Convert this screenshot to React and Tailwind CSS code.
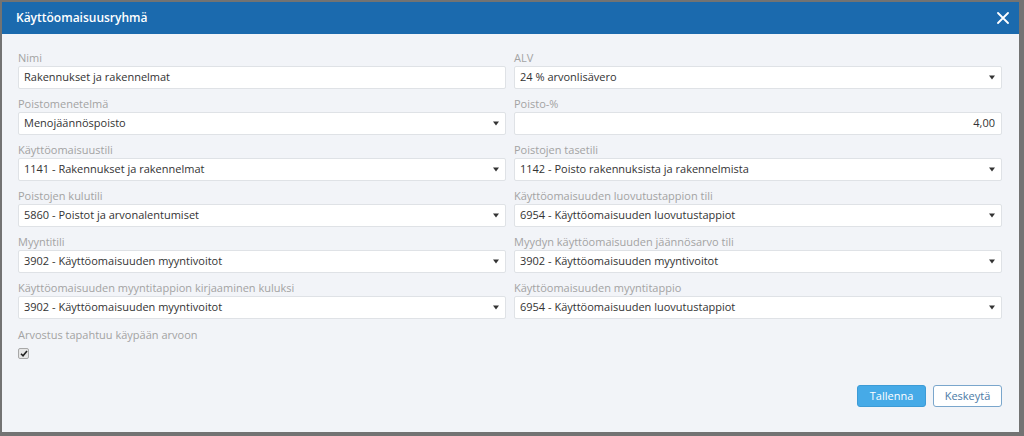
import React from "react";

const Caret = () => (
  <svg width="6" height="5" viewBox="0 0 6 5" className="shrink-0">
    <path d="M0 0.5 L6 0.5 L3 4.5 Z" fill="#333" />
  </svg>
);

function Field({ label, value, select, right }) {
  return (
    <div className="flex flex-col">
      <div className="h-[17px] leading-[17px] text-[11px] text-[#a3a3a3]">{label}</div>
      <div className="h-[23px] bg-white border border-[#dfe2e6] rounded-[2px] flex items-center pl-[5px] pr-[6px] text-[11px] text-[#333]">
        <span className={"flex-1 truncate " + (right ? "text-right" : "")}>{value}</span>
        {select && <Caret />}
      </div>
    </div>
  );
}

export default function App() {
  const fields = [
    ["Nimi", "Rakennukset ja rakennelmat", false],
    ["ALV", "24 % arvonlisävero", true],
    ["Poistomenetelmä", "Menojäännöspoisto", true],
    ["Poisto-%", "4,00", false, true],
    ["Käyttöomaisuustili", "1141 - Rakennukset ja rakennelmat", true],
    ["Poistojen tasetili", "1142 - Poisto rakennuksista ja rakennelmista", true],
    ["Poistojen kulutili", "5860 - Poistot ja arvonalentumiset", true],
    ["Käyttöomaisuuden luovutustappion tili", "6954 - Käyttöomaisuuden luovutustappiot", true],
    ["Myyntitili", "3902 - Käyttöomaisuuden myyntivoitot", true],
    ["Myydyn käyttöomaisuuden jäännösarvo tili", "3902 - Käyttöomaisuuden myyntivoitot", true],
    ["Käyttöomaisuuden myyntitappion kirjaaminen kuluksi", "3902 - Käyttöomaisuuden myyntivoitot", true],
    ["Käyttöomaisuuden myyntitappio", "6954 - Käyttöomaisuuden luovutustappiot", true],
  ];
  return (
    <div
      className="w-[1024px] h-[436px] bg-[#737373] pt-[2px] pl-[2px] pr-[5px] pb-[4px] overflow-hidden"
      style={{ fontFamily: '"Open Sans", "Noto Sans", sans-serif' }}
    >
      <div className="h-full flex flex-col bg-[#f2f4f8]">
        <div className="h-[32px] shrink-0 bg-[#1b6aae] flex items-center justify-between pl-[14px] pr-[10px]">
          <span className="text-white text-[12px] font-semibold">Käyttöomaisuusryhmä</span>
          <svg width="12" height="12" viewBox="0 0 12 12">
            <path d="M1 1 L11 11 M11 1 L1 11" stroke="#fff" strokeWidth="1.8" strokeLinecap="round" />
          </svg>
        </div>
        <div className="flex-1 flex flex-col pt-[15px] pl-[16px] pr-[17px]">
          <div className="grid grid-cols-2 gap-x-[8px] gap-y-[6px]">
            {fields.map(([l, v, s, r], i) => (
              <Field key={i} label={l} value={v} select={s} right={r} />
            ))}
          </div>
          <div className="mt-[7px] h-[17px] leading-[17px] text-[11px] text-[#a3a3a3]">Arvostus tapahtuu käypään arvoon</div>
          <div className="mt-[5px] w-[11px] h-[11px] rounded-[2px] border border-[#a8a8a8] bg-[#e6e6e6] flex items-center justify-center">
            <svg width="8" height="7" viewBox="0 0 8 7">
              <path d="M1 3.8 L3 5.8 L7 1" stroke="#222" strokeWidth="1.6" fill="none" />
            </svg>
          </div>
          <div className="flex-1" />
          <div className="flex justify-end gap-[7px] mb-[25px]">
            <button className="h-[22px] w-[69px] rounded-[3px] bg-[#46aae7] border border-[#3d9bd6] text-white text-[11px]">Tallenna</button>
            <button className="h-[22px] w-[69px] rounded-[3px] bg-white border border-[#7aa6cc] text-[#4b7aa6] text-[11px]">Keskeytä</button>
          </div>
        </div>
      </div>
    </div>
  );
}
